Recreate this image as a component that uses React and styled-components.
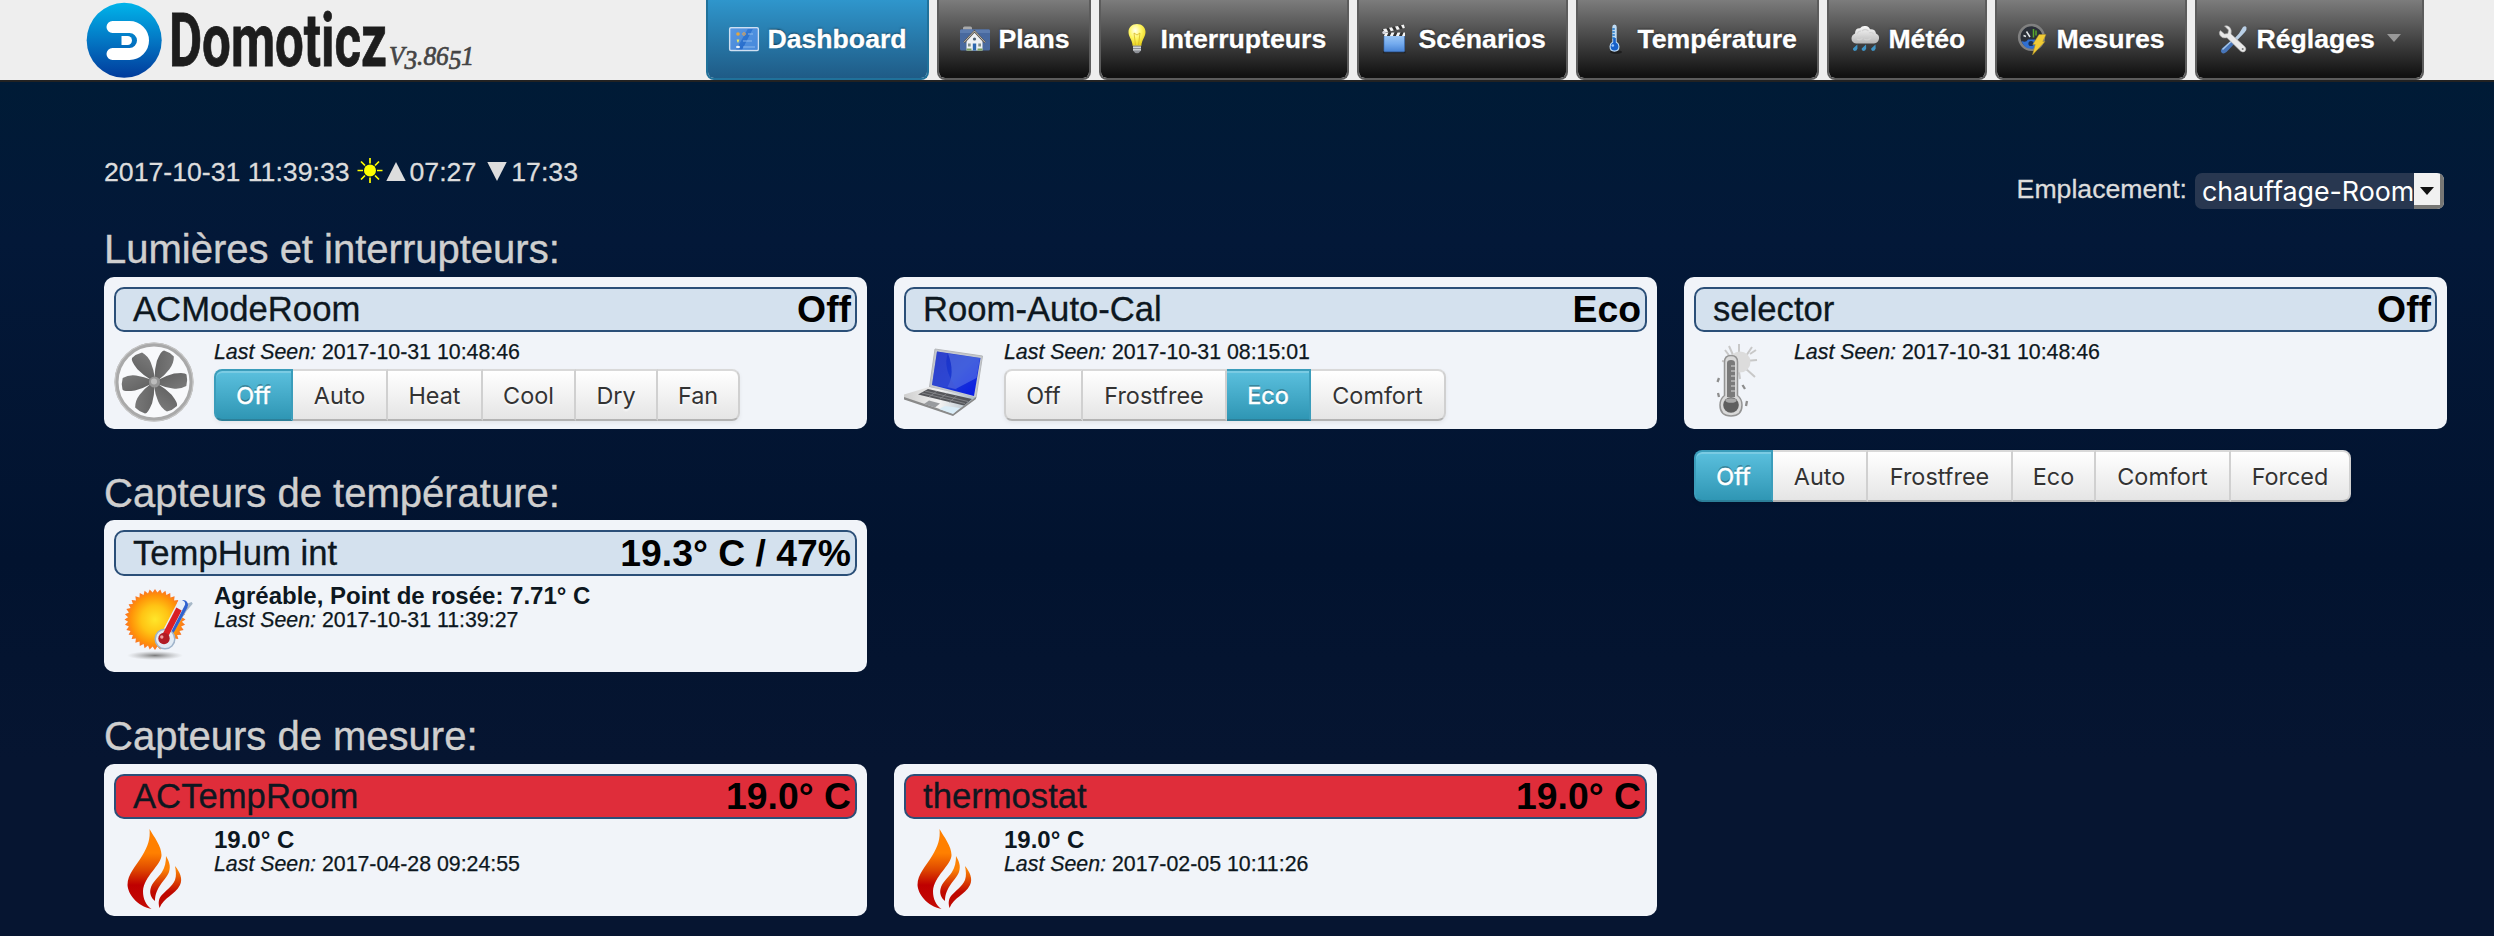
import React from "react";
import styled, { createGlobalStyle, css } from "styled-components";

const GlobalStyle = createGlobalStyle`
  *, *::before, *::after { box-sizing: border-box; }
  body {
    margin: 0;
    min-height: 936px;
    background: linear-gradient(#001b36 82px, #031838 240px, #02132f 560px, #061531 760px, #061531) no-repeat #061531;
    font-family: "Liberation Sans", Arial, sans-serif;
    font-size: 26.67px;
    overflow: hidden;
  }
`;

const Header = styled.header`
  display: flex;
  align-items: flex-start;
  justify-content: space-between;
  height: 82px;
  padding: 0 70px 0 86px;
  background: #eeeeee;
  border-bottom: 2px solid #222222;
`;

const Brand = styled.svg`
  display: block;
  width: 400px;
  height: 80px;
`;

const Nav = styled.nav`
  display: flex;
  gap: 8px;
`;

const NavItem = styled.a`
  display: flex;
  align-items: center;
  gap: 7.4px;
  width: ${(p) => p.$w}px;
  height: 80px;
  padding-left: 20px;
  border: 2px solid #5c5c5c;
  border-top: 0;
  border-radius: 0 0 8px 8px;
  background: linear-gradient(#7c7c7c, #111111 97%) padding-box;
  color: #ffffff;
  font-weight: bold;
  line-height: 78px;
  white-space: nowrap;
  text-shadow: 0 -1px 2px rgba(0, 0, 0, 0.5);
  -webkit-text-stroke: 0.3px #ffffff;
  ${(p) =>
    p.$active &&
    css`
      border-color: #20719a;
      background: linear-gradient(#2f96cc, #1f5b86) padding-box;
    `}
`;

const NavIcon = styled.svg`
  flex: none;
  width: 32px;
  height: 32px;
  overflow: visible;
`;

const NavCaret = styled.i`
  margin-left: 5px;
  margin-bottom: 2px;
  border: 7.5px solid transparent;
  border-top: 8px solid #999999;
  border-bottom: 0;
`;

const Main = styled.main`
  padding: 75px 47px 0 104px;
`;

const TopBar = styled.div`
  display: flex;
  justify-content: space-between;
  height: 69px;
  line-height: 30px;
  color: #dddddd;
`;

const Clock = styled.div`
  display: flex;
  align-items: flex-start;
  height: 30px;
  white-space: pre;
  -webkit-text-stroke: 0.3px #dddddd;
`;

const ClockGlyph = styled.svg`
  width: ${(p) => p.$w}px;
  height: 30px;
  margin: 0 ${(p) => p.$right || 0}px 0 ${(p) => p.$left || 0}px;
`;

const Location = styled.div`
  display: flex;
  align-items: flex-start;
  gap: 8px;
  padding: 16px 3px 0 0;
  & > label {
    line-height: 32px;
    -webkit-text-stroke: 0.3px #dddddd;
  }
`;

const RoomSelect = styled.div`
  display: flex;
  width: 249px;
  height: 36px;
  border-radius: 7px;
  overflow: hidden;
  background: #283750;
  color: #ffffff;
  font-family: Inter, sans-serif;
  font-size: 26.8px;
  line-height: 37px;
  white-space: nowrap;
`;

const RoomName = styled.span`
  flex: 1;
  min-width: 0;
  padding-left: 7px;
`;

const RoomArrow = styled.span`
  display: flex;
  flex: none;
  align-items: center;
  justify-content: center;
  width: 30px;
  border: solid #777775;
  border-width: 0 4px 4px 0;
  background: #f1f1f1;
  &::after {
    content: "";
    border: 7px solid transparent;
    border-top: 8px solid #111111;
    border-bottom: 0;
    margin-top: 3px;
  }
`;

const Section = styled.section`
  & + & { margin-top: 41px; }
`;

const SectionTitle = styled.h2`
  height: ${(p) => p.$h}px;
  margin: 0;
  color: #cfcfcf;
  font-size: 40px;
  font-weight: normal;
  line-height: 46px;
  -webkit-text-stroke: 0.4px #cfcfcf;
`;

const CardRow = styled.div`
  display: grid;
  grid-template-columns: repeat(3, 763px);
  gap: 27px;
`;

const Card = styled.article`
  height: 152px;
  padding: 10px;
  border-radius: 10px;
  background: #f1f4f9;
`;

const CardHeader = styled.header`
  display: flex;
  justify-content: space-between;
  height: ${(p) => (p.$tall ? 46 : 45)}px;
  padding: 0 4px 0 17px;
  border: 2px solid #2b4f78;
  border-radius: 10px;
  background: ${(p) => (p.$alert ? "#df2d3a" : "#d4e1ee")};
  line-height: ${(p) => (p.$tall ? 42 : 40)}px;
`;

const CardName = styled.span`
  color: #0d1720;
  font-size: 34.67px;
  -webkit-text-stroke: 0.3px #0d1720;
`;

const CardValue = styled.strong`
  color: #000000;
  font-size: 37.33px;
`;

const CardBody = styled.div`
  display: flex;
  gap: 20px;
  height: 90px;
`;

const DeviceIcon = styled.svg`
  flex: none;
  width: 80px;
  height: 80px;
  margin-top: 10px;
  overflow: visible;
`;

const Details = styled.div`
  padding-top: ${(p) => (p.$tall ? 7 : 8)}px;
  color: #0d1720;
`;

const Status = styled.div`
  font-size: 24px;
  font-weight: bold;
  line-height: 25px;
`;

const LastSeen = styled.div`
  font-size: 21.33px;
  line-height: 24px;
  -webkit-text-stroke: 0.25px #0d1720;
`;

const Levels = styled.div`
  display: flex;
  width: max-content;
  margin-top: ${(p) => p.$offset}px;
  border-radius: 8px;
  box-shadow: 0 2px 4px rgba(0, 0, 0, 0.06);
`;

const Level = styled.button`
  width: ${(p) => p.$w}px;
  height: 52px;
  padding: 1px 0 0;
  border: 2px solid;
  border-color: #d9d9d9 #d0d0d0 #b3b3b3;
  border-left-width: 0;
  background: linear-gradient(#ffffff, #e5e5e5);
  color: #333333;
  font-family: Inter, sans-serif;
  font-size: 23.4px;
  line-height: 46px;
  text-shadow: 0 2px 2px rgba(255, 255, 255, 0.75);
  &:first-child { border-left-width: 2px; border-radius: 8px 0 0 8px; }
  &:last-child { border-radius: 0 8px 8px 0; }
  ${(p) =>
    p.$active &&
    css`
      border-color: #3b9dbb #3b9dbb #2c7f99;
      background: linear-gradient(#5bc0de, #2f96b4);
      box-shadow: inset 0 2px 0 rgba(255, 255, 255, 0.2);
      color: #ffffff;
      text-shadow: 0 -2px 0 rgba(0, 0, 0, 0.25);
      -webkit-text-stroke: 0.5px #ffffff;
    `}
`;

/* ---------- navigation icons ---------- */

const DashboardIcon = () => (
  <NavIcon viewBox="0 0 32 32">
    <defs>
      <linearGradient id="dash" x1="0" y1="0" x2="1" y2="1">
        <stop offset="0" stopColor="#3f86dd" />
        <stop offset="1" stopColor="#1d62c4" />
      </linearGradient>
    </defs>
    <rect x="1.7" y="4.7" width="28.6" height="22.8" rx="1.2" fill="url(#dash)" stroke="#cfe0f2" strokeWidth="1.5" />
    <path d="M14 27L25 5.500h4.500V26.700z" fill="#6aa8ec" opacity=".55" />
    <path d="M2.500 5.500H20L8 27H2.500z" fill="#8bbcf0" opacity=".35" />
    <circle cx="10" cy="11" r="1.800" fill="#e7a63c" />
    <circle cx="16" cy="11" r="1.300" fill="none" stroke="#e3a453" />
    <path d="M8.600 16.500h2.800l-1 3h-.9z" fill="#e5e46a" />
    <ellipse cx="10" cy="24" rx="2" ry="1.200" fill="#e9f1fa" />
    <path d="M15 18h9M15 24h12M20 11h5" stroke="#9fc5f1" strokeWidth=".8" />
  </NavIcon>
);

const PlansIcon = () => (
  <NavIcon viewBox="0 0 32 32">
    <path d="M4 5q0-1.500 1.500-1.500h6Q13 3.500 13 5v2H4z" fill="#a9a9a9" />
    <path d="M2 6.500h28q1 0 1 1.500V26q0 1.500-1.500 1.500h-27Q1 27.500 1 26V8q0-1.500 1-1.500z" fill="#48699f" />
    <path d="M1 8q0-1.500 1-1.500h28q1 0 1 1.500v2H1z" fill="#5c7caf" />
    <path d="M7.500 17L15.500 9l8 8v10.500h-16z" fill="#eef1f4" />
    <path d="M5 19.500L15.500 8.300 26 19.500" fill="none" stroke="#5a5650" strokeWidth="2" />
    <path d="M5 19.300L15.500 8 26 19.300" fill="none" stroke="#e8e2d5" strokeWidth=".7" />
    <path d="M13.800 20.500h3.400v7h-3.400z" fill="#2d67ae" />
    <circle cx="15.500" cy="16" r="1.600" fill="#4d6072" />
    <path d="M9 20.500h2.700v3H9zM19.300 20.500H22v3h-2.700z" fill="#7e8d8b" />
    <path d="M7.500 25.500h5v2h-5zM18.500 25.500h5v2h-5z" fill="#7ba05c" />
  </NavIcon>
);

const BulbIcon = () => (
  <NavIcon viewBox="0 0 32 32">
    <defs>
      <radialGradient id="bulb" cx=".4" cy=".3" r=".75">
        <stop offset="0" stopColor="#fffef0" />
        <stop offset=".45" stopColor="#fff766" />
        <stop offset="1" stopColor="#e5cc12" />
      </radialGradient>
    </defs>
    <path d="M16 1c5 0 8.500 3.500 8.500 8 0 5-3.500 7-4.200 14h-8.600C11 16 7.500 14 7.500 9c0-4.500 3.500-8 8.500-8z" fill="url(#bulb)" />
    <path d="M13 10l1.500 12M19 10l-1.500 12M13 10l3 2 3-2" fill="none" stroke="#d8b928" strokeWidth=".8" />
    <path d="M12 22.500h8v5q-2 3-4 3t-4-3z" fill="#8c8f95" />
    <path d="M12 24.300h8M12 26.800h8" stroke="#e4e6ea" strokeWidth="1" />
    <path d="M14.500 30.500h3l-1.500 1.500z" fill="#333" />
  </NavIcon>
);

const SceneIcon = () => (
  <NavIcon viewBox="0 0 32 32">
    <defs>
      <linearGradient id="clap" x1="0" y1="0" x2="0" y2="1">
        <stop offset="0" stopColor="#9cc6f4" />
        <stop offset=".5" stopColor="#74abee" />
        <stop offset="1" stopColor="#4783d5" />
      </linearGradient>
    </defs>
    <path d="M4 29.300h22.500" stroke="#1b1b1b" strokeWidth="2" opacity=".7" />
    <rect x="5" y="12.500" width="20.500" height="16.300" rx=".8" fill="url(#clap)" stroke="#376db8" strokeWidth=".6" />
    <path d="M3 6.300L25.500 1.500l.8 3.600L3.800 10z" fill="#333" />
    <path d="M4 6.100l3.300-.7 1.800 3.400-3.300.7zM10 4.800l3-.6 1.800 3.400-3 .7zM16 3.500l3-.6 1.800 3.400-3 .6zM22 2.300l3-.7.9 3.500-2.100.5z" fill="#f5f5f5" />
    <path d="M4.500 9.500h21.500v3.500H4.500z" fill="#333" />
    <path d="M6.500 9.500h3l-1.600 3.500h-3zM12.500 9.500h3l-1.600 3.500h-3zM18.500 9.500h3l-1.600 3.500h-3zM24.500 9.500H26v3.500h-3z" fill="#f5f5f5" />
    <circle cx="5" cy="9.500" r="1.700" fill="#d5d5dd" />
  </NavIcon>
);

const ThermoIcon = () => (
  <NavIcon viewBox="0 0 32 32">
    <ellipse cx="18" cy="29" rx="6" ry="1.800" fill="#111" opacity=".6" />
    <path d="M14.300 4q0-2.600 2.200-2.600T18.700 4v14.700q2.800 1.600 2.800 4.800 0 5.200-5 5.200t-5-5.200q0-3.200 2.800-4.800z" fill="#bfdcf5" />
    <path d="M15.200 15h2.600v4.500q2.600 1.200 2.600 4 0 4-3.900 4t-3.900-4q0-2.800 2.600-4z" fill="#1760c9" />
    <path d="M14.300 6h2.500M14.300 9h2.500M14.300 12h2.500M14.300 15h2.500" stroke="#1d75c8" strokeWidth="1.500" />
    <circle cx="14.800" cy="22.500" r="1.300" fill="#9cc9ff" />
  </NavIcon>
);

const RainIcon = () => (
  <NavIcon viewBox="0 0 32 32">
    <defs>
      <linearGradient id="cloud" x1="0" y1="0" x2="0" y2="1">
        <stop offset="0" stopColor="#fafafa" />
        <stop offset="1" stopColor="#b7b7b7" />
      </linearGradient>
    </defs>
    <path d="M7 20.500q-4.500-.8-4.500-5 0-3.500 3.500-5Q6 5 11 5.200 13 2.500 16.500 3q3.500.3 4.500 3.200 5.500-.4 6 4.300 3.500 1.500 3 5.300-.6 4-5 4.700z" fill="url(#cloud)" />
    <path d="M8 11q1-3 4-3M13 8q3-3 6.500 0M20 10q3-1.500 5 1.500M8 16q3 2 5.500-1M15 16q4 2 7-1" fill="none" stroke="#d2d2d2" strokeWidth="1.200" />
    <path d="M8.300 21.500l.2 4q-.7 2.500-3 2.500-2-.8-1.500-2.500zM17 21.500l.2 4q-.7 2.500-3 2.500-2-.8-1.500-2.500zM26.500 21.500l.2 4q-.7 2.500-3 2.500-2-.8-1.500-2.500z" fill="#3f93c4" />
  </NavIcon>
);

const MeterIcon = () => (
  <NavIcon viewBox="0 0 32 32">
    <circle cx="14.500" cy="14.300" r="12.300" fill="#2a2f38" stroke="#808080" strokeWidth="2.600" />
    <path d="M4.500 18q4.500 2 6.500-1.500h7q2 3.500 6.500 1.500-2.500 7.500-10 7.700T4.500 18z" fill="#2f6fd1" />
    <circle cx="14" cy="20.500" r="2.600" fill="#1b3153" />
    <path d="M6.500 12.500l2.500 1M9.500 8.500L13 14" stroke="#dfe5e8" strokeWidth="1.500" />
    <path d="M16.500 6v8.500M19 7.500v5" stroke="#5aa92c" strokeWidth="1.500" />
    <path d="M22 11.500h7l-3.200 7h2.200L15.500 32l2.700-10.500h-2.500z" fill="#f0cb35" stroke="#a68a2b" strokeWidth=".5" />
  </NavIcon>
);

const ToolsIcon = () => (
  <NavIcon viewBox="0 0 32 32">
    <path d="M26 4q2.500-1.500 3.500.5.500 1.800-1.500 4.500l-3 3.300L10.500 27l-2-2L22 10.500z" fill="#b9cfe6" />
    <path d="M14.500 17.500l3 3-8 8.500q-3 2.500-5 .5-1.500-2 .8-4.500z" fill="#4775b8" />
    <path d="M5.500 26.500l8.500-8" stroke="#a7c7ea" strokeWidth="1.500" />
    <path d="M7.500 3l4 4-.6 3.500-3.400.5L3.500 7.500Q1.500 9 3 12.500q2.500 3.500 7 2.300L23.500 28q2.500 2 4.500.2 2-2.200-.3-4.700L14 11Q15 6.500 12.500 4 10 2 7.500 3z" fill="#e9e9e9" stroke="#a9a9a9" strokeWidth=".6" />
    <circle cx="25.700" cy="26" r="1" fill="#777" />
  </NavIcon>
);

/* ---------- device icons ---------- */

const FanIcon = () => (
  <DeviceIcon viewBox="0 0 80 80">
    <defs>
      <linearGradient id="blade" x1="0" y1="0" x2="1" y2="1">
        <stop offset="0" stopColor="#5e5e5e" />
        <stop offset="1" stopColor="#7b7b7b" />
      </linearGradient>
    </defs>
    <circle cx="40" cy="40" r="37.500" fill="#f8f9fb" stroke="#a9a9a9" strokeWidth="4" />
    <circle cx="40" cy="40" r="39" fill="none" stroke="#c6c6c6" strokeWidth="1.200" />
    {[0, 60, 120, 180, 240, 300].map((a) => (
      <path
        key={a}
        transform={`rotate(${a} 40.500 40)`}
        d="M43 38.500Q52 33.500 60 31.500q11-1.500 12.500 1 1.500 6-.2 11.500-6 3.500-13.300 2.500Q51 45.500 43 42z"
        fill="url(#blade)"
      />
    ))}
    <circle cx="40.500" cy="40" r="5.500" fill="#969696" />
    <circle cx="40" cy="39.500" r="3" fill="#bcbcbc" />
  </DeviceIcon>
);

const LaptopIcon = () => (
  <DeviceIcon viewBox="0 0 80 80">
    <defs>
      <linearGradient id="screen" x1="0" y1="0" x2="1" y2="1">
        <stop offset="0" stopColor="#1c2fc4" />
        <stop offset=".5" stopColor="#1b3ad2" />
        <stop offset="1" stopColor="#0716e8" />
      </linearGradient>
      <linearGradient id="deck" x1="0" y1="0" x2="1" y2="0">
        <stop offset="0" stopColor="#cfcfcf" />
        <stop offset=".5" stopColor="#f2f2f2" />
        <stop offset="1" stopColor="#a8b8c4" />
      </linearGradient>
    </defs>
    <path d="M31 7l47.500 7-6.500 42L25.500 45z" fill="#c5c8cd" stroke="#b5b7ba" strokeWidth="1" />
    <path d="M33 9.500l43.500 6.500-6.500 38L28 43z" fill="url(#screen)" />
    <path d="M44 11.500L76 16l-3.500 20-21 11-8-2q8-14 .5-33.500z" fill="#7c98ee" opacity=".4" />
    <path d="M33 9.500l11 2q-6 14 9 36L28 43z" fill="#4456d2" opacity=".45" />
    <path d="M25 45l47 10.500v1L49 72.500 0 55.500v-3z" fill="url(#deck)" />
    <path d="M0 55v2.500l49 16.500 23-17v-2L49 71.500z" fill="#8a8a8a" />
    <path d="M24 47l44 10-8 6.500L14 52.500z" fill="#55565a" />
    <path d="M21 49l43 10.500M18 51l43 10.500M33 49l-8 6M43 51l-8 7M53 53.500l-8 7" stroke="#8c8d90" strokeWidth=".8" />
    <path d="M25 58.500l11 3-5 4-11-3.500z" fill="#999b9e" />
    <path d="M41 64l15 2-7 6-14-5z" fill="#d9ecf7" />
  </DeviceIcon>
);

const GreyThermometerIcon = () => (
  <DeviceIcon viewBox="0 0 80 80">
    <g stroke="#c8c8c8" strokeWidth="2">
      <path d="M45 2v11M31 8l6 8M58 5l-6 9M51 19l12-1M51 26l10 9M45 30l1 7M28 19l7 1M35 4l4 9M56 12l6-4" />
    </g>
    <circle cx="46" cy="20" r="10.500" fill="#dcdcdc" />
    <path d="M30.500 20q0-6.500 6.500-6.500t6.500 6.500v33.500q4.500 3.500 4.500 9.500 0 11-11 11t-11-11q0-6 4.500-9.500z" fill="#d9d9d9" stroke="#949494" strokeWidth="1.500" />
    <path d="M33 21q0-3 4-3t4 3v34h-8z" fill="#7a7a7a" />
    <path d="M37 24h4M37 29h4M37 34h4M37 39h4M37 44h4M37 49h4" stroke="#b9b9b9" strokeWidth="1.500" />
    <circle cx="37" cy="63" r="7.800" fill="#5f5f5f" />
    <ellipse cx="37" cy="58.500" rx="5.500" ry="2.300" fill="#a8a8a8" />
    <path d="M25 36l-1.500 4M24 51l1 4M48.500 43l2.500 4M53 59l-1 5" stroke="#8d8d8d" strokeWidth="2.300" />
  </DeviceIcon>
);

const sunTeeth = Array.from({ length: 72 }, (_, i) => {
  const a = (i / 72) * Math.PI * 2;
  const r = i % 2 ? 27 : 30.5;
  return `${(41 + r * Math.cos(a)).toFixed(2)},${(33.5 + r * Math.sin(a)).toFixed(2)}`;
}).join(" ");

const SunThermometerIcon = () => (
  <DeviceIcon viewBox="0 0 80 80">
    <defs>
      <radialGradient id="sun">
        <stop offset="0" stopColor="#ffe62a" />
        <stop offset=".45" stopColor="#ffc414" />
        <stop offset=".8" stopColor="#ff9208" />
        <stop offset="1" stopColor="#f9702a" />
      </radialGradient>
      <radialGradient id="shade">
        <stop offset="0" stopColor="#666" stopOpacity=".85" />
        <stop offset="1" stopColor="#999" stopOpacity="0" />
      </radialGradient>
    </defs>
    <ellipse cx="41" cy="69.500" rx="28" ry="4.500" fill="url(#shade)" />
    <polygon points={sunTeeth} fill="url(#sun)" />
    <path d="M70 20l8-3-6 7-13 21" fill="none" stroke="#a7b8c8" strokeWidth="2" />
    <path d="M69 19L56 43" stroke="#2f62cf" strokeWidth="10" strokeLinecap="round" />
    <path d="M67 18L51 49" stroke="#e7eff8" strokeWidth="8" strokeLinecap="round" />
    <circle cx="51" cy="53" r="9.800" fill="#e2ebf4" stroke="#9fb4cb" strokeWidth="1.500" />
    <path d="M65 23L50 52" stroke="#d91f25" strokeWidth="6" />
    <circle cx="50" cy="52.500" r="5.700" fill="#b11c25" />
    <circle cx="47.800" cy="51" r="1.700" fill="#f0a0a0" />
  </DeviceIcon>
);

const FlameIcon = () => (
  <DeviceIcon viewBox="0 0 80 80">
    <defs>
      <linearGradient id="flame" gradientUnits="userSpaceOnUse" x1="0" y1="0" x2="0" y2="80">
        <stop offset=".3" stopColor="#ff8000" />
        <stop offset=".5" stopColor="#e04a00" />
        <stop offset=".7" stopColor="#bf0000" />
        <stop offset="1" stopColor="#c40a05" />
      </linearGradient>
      <linearGradient id="flameSmall" gradientUnits="userSpaceOnUse" x1="0" y1="28" x2="0" y2="78">
        <stop offset=".25" stopColor="#fc8205" />
        <stop offset=".7" stopColor="#bf0800" />
      </linearGradient>
    </defs>
    <path d="M35.500 0C40 8 47.500 17 47.500 26C47.500 36 30 47 29 62C29 70 32 76 37.500 80C23 77 14 65 13.500 56C13.500 45 22 37 28 27C34 17 36.500 10 35.500 0z" fill="url(#flame)" />
    <path d="M52 27C55 32 57 37 55 43C52 51 41 58 41 72C37 69 35.500 64 36.500 60C38 53 44 49 48 43C51 38 52 33 52 27z" fill="url(#flameSmall)" />
    <path d="M61 37C66 43 69 50 66 56C61 66 50 68 45.500 79C44.500 75 44 71 47 67C51 62 58 58 61 51C62.500 47 62 42 61 37z" fill="url(#flameSmall)" />
  </DeviceIcon>
);

/* ---------- data ---------- */

const navItems = [
  { label: "Dashboard", icon: DashboardIcon, width: 223, active: true },
  { label: "Plans", icon: PlansIcon, width: 154 },
  { label: "Interrupteurs", icon: BulbIcon, width: 250 },
  { label: "Scénarios", icon: SceneIcon, width: 211 },
  { label: "Température", icon: ThermoIcon, width: 243 },
  { label: "Météo", icon: RainIcon, width: 160 },
  { label: "Mesures", icon: MeterIcon, width: 192 },
  { label: "Réglages", icon: ToolsIcon, width: 229, menu: true },
];

const sections = [
  {
    title: "Lumières et interrupteurs:",
    titleHeight: 51,
    cards: [
      {
        name: "ACModeRoom",
        value: "Off",
        icon: FanIcon,
        seen: "2017-10-31 10:48:46",
        levels: [["Off", 79], ["Auto", 95], ["Heat", 95], ["Cool", 93], ["Dry", 82], ["Fan", 82]],
      },
      {
        name: "Room-Auto-Cal",
        value: "Eco",
        icon: LaptopIcon,
        seen: "2017-10-31 08:15:01",
        levels: [["Off", 79], ["Frostfree", 144], ["Eco", 84], ["Comfort", 135]],
      },
      {
        name: "selector",
        value: "Off",
        icon: GreyThermometerIcon,
        seen: "2017-10-31 10:48:46",
        levelsBelow: true,
        levels: [["Off", 79], ["Auto", 95], ["Frostfree", 145], ["Eco", 83], ["Comfort", 135], ["Forced", 120]],
      },
    ],
  },
  {
    title: "Capteurs de température:",
    titleHeight: 50,
    tall: true,
    cards: [
      {
        name: "TempHum int",
        value: "19.3° C / 47%",
        icon: SunThermometerIcon,
        status: "Agréable, Point de rosée: 7.71° C",
        seen: "2017-10-31 11:39:27",
      },
    ],
  },
  {
    title: "Capteurs de mesure:",
    titleHeight: 51,
    alert: true,
    cards: [
      { name: "ACTempRoom", value: "19.0° C", icon: FlameIcon, status: "19.0° C", seen: "2017-04-28 09:24:55" },
      { name: "thermostat", value: "19.0° C", icon: FlameIcon, status: "19.0° C", seen: "2017-02-05 10:11:26" },
    ],
  },
];

/* ---------- components ---------- */

const Logo = () => (
  <Brand viewBox="0 0 400 80">
    <defs>
      <linearGradient id="logo" x1="0" y1="0" x2="0" y2="1">
        <stop offset="0" stopColor="#00b4ea" />
        <stop offset=".5" stopColor="#0377c4" />
        <stop offset="1" stopColor="#013a9b" />
      </linearGradient>
    </defs>
    <circle cx="38.200" cy="40.300" r="37.500" fill="url(#logo)" />
    <path d="M26.500 27h17a13.500 13.500 0 0 1 0 27h-17" fill="none" stroke="#fff" strokeWidth="12" strokeLinecap="round" />
    <path d="M35.500 36h6a4.500 4.500 0 0 1 0 9h-6z" fill="#fff" />
    <text
      x="83"
      y="65.700"
      textLength="218"
      lengthAdjust="spacingAndGlyphs"
      fontFamily="Roboto, sans-serif"
      fontWeight="700"
      fontSize="75"
      fill="#1d1d1d"
      stroke="#1d1d1d"
      strokeWidth=".8"
    >
      Domoticz
    </text>
    <text
      x="303"
      y="65"
      dy="0 4 -4 0 0 4 -4"
      textLength="85"
      lengthAdjust="spacingAndGlyphs"
      fontFamily="Liberation Serif, serif"
      fontStyle="italic"
      fontSize="27.500"
      fill="#444"
      stroke="#444"
      strokeWidth=".7"
    >
      V3.8651
    </text>
  </Brand>
);

const SunGlyph = () => (
  <ClockGlyph $w={26} $left={7} viewBox="0 0 26 30">
    <circle cx="13" cy="13.500" r="6" fill="#ffff00" />
    <path
      d="M13 1v5.500M13 20.500V26M.5 13.500H6M20 13.500h5.500M4 4.500l4 4M18 18.500l4 4M4 22.500l4-4M18 8.500l4-4"
      stroke="#ffff00"
      strokeWidth="1.700"
    />
  </ClockGlyph>
);

const LevelButtons = ({ levels, value, offset }) => (
  <Levels $offset={offset}>
    {levels.map(([label, width]) => (
      <Level key={label} $w={width} $active={label === value}>
        {label}
      </Level>
    ))}
  </Levels>
);

const DeviceCard = ({ name, value, icon: Icon, status, seen, levels, levelsBelow, tall, alert }) => (
  <Card>
    <CardHeader $tall={tall} $alert={alert}>
      <CardName>{name}</CardName>
      <CardValue>{value}</CardValue>
    </CardHeader>
    <CardBody>
      <Icon />
      <Details $tall={tall}>
        {status && <Status>{status}</Status>}
        <LastSeen>
          <em>Last Seen:</em> {seen}
        </LastSeen>
        {levels && !levelsBelow && <LevelButtons levels={levels} value={value} offset={5} />}
      </Details>
    </CardBody>
    {levelsBelow && <LevelButtons levels={levels} value={value} offset={28} />}
  </Card>
);

export default function App() {
  return (
    <>
      <GlobalStyle />
      <Header>
        <Logo />
        <Nav>
          {navItems.map(({ label, icon: Icon, width, active, menu }) => (
            <NavItem key={label} $w={width} $active={active}>
              <Icon />
              {label}
              {menu && <NavCaret />}
            </NavItem>
          ))}
        </Nav>
      </Header>
      <Main>
        <TopBar>
          <Clock>
            <span>2017-10-31 11:39:33</span>
            <SunGlyph />
            <ClockGlyph $w={20} $left={3} $right={4} viewBox="0 0 20 30">
              <path d="M10 5l9.700 19H.3z" fill="#dddddd" />
            </ClockGlyph>
            <span>07:27</span>
            <ClockGlyph $w={20} $left={11} $right={4} viewBox="0 0 20 30">
              <path d="M10 24L.3 5h19.400z" fill="#dddddd" />
            </ClockGlyph>
            <span>17:33</span>
          </Clock>
          <Location>
            <label>Emplacement:</label>
            <RoomSelect>
              <RoomName>chauffage-Room</RoomName>
              <RoomArrow />
            </RoomSelect>
          </Location>
        </TopBar>
        {sections.map((s) => (
          <Section key={s.title}>
            <SectionTitle $h={s.titleHeight}>{s.title}</SectionTitle>
            <CardRow>
              {s.cards.map((c) => (
                <DeviceCard key={c.name} {...c} tall={s.tall} alert={s.alert} />
              ))}
            </CardRow>
          </Section>
        ))}
      </Main>
    </>
  );
}
